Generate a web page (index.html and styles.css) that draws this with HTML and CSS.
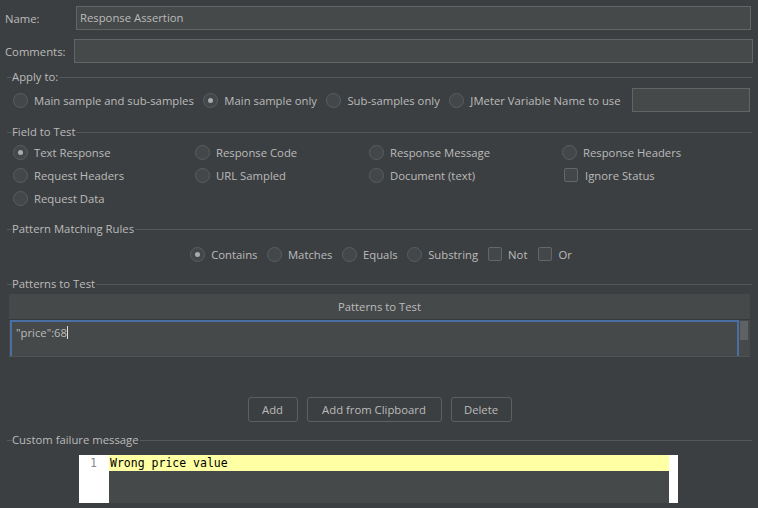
FILE: index.html
```html
<!DOCTYPE html>
<html>
<head>
<meta charset="utf-8">
<link rel="stylesheet" href="styles.css">
</head>
<body>
<div class="page">
  <div class="field name-row">
    <span class="lbl name-lbl">Name:</span>
    <div class="input">Response Assertion</div>
  </div>
  <div class="field comments-row">
    <span class="lbl comments-lbl">Comments:</span>
    <div class="input"></div>
  </div>

  <div class="section apply-title"><span class="stitle">Apply to:</span></div>
  <div class="apply-row">
    <label class="opt"><span class="radio"></span>Main sample and sub-samples</label>
    <label class="opt"><span class="radio on"></span>Main sample only</label>
    <label class="opt"><span class="radio"></span>Sub-samples only</label>
    <label class="opt"><span class="radio"></span>JMeter Variable Name to use</label>
    <div class="input var-input"></div>
  </div>

  <div class="section field-title"><span class="stitle">Field to Test</span></div>
  <div class="field-grid">
    <label class="opt"><span class="radio on"></span>Text Response</label>
    <label class="opt"><span class="radio"></span>Response Code</label>
    <label class="opt"><span class="radio"></span>Response Message</label>
    <label class="opt"><span class="radio"></span>Response Headers</label>
    <label class="opt"><span class="radio"></span>Request Headers</label>
    <label class="opt"><span class="radio"></span>URL Sampled</label>
    <label class="opt"><span class="radio"></span>Document (text)</label>
    <label class="opt"><span class="check"></span>Ignore Status</label>
    <label class="opt"><span class="radio"></span>Request Data</label>
  </div>

  <div class="section rules-title"><span class="stitle">Pattern Matching Rules</span></div>
  <div class="rules-row">
    <label class="opt"><span class="radio on"></span>Contains</label>
    <label class="opt"><span class="radio"></span>Matches</label>
    <label class="opt"><span class="radio"></span>Equals</label>
    <label class="opt"><span class="radio"></span>Substring</label>
    <label class="opt"><span class="check"></span>Not</label>
    <label class="opt"><span class="check"></span>Or</label>
  </div>

  <div class="section patterns-title"><span class="stitle">Patterns to Test</span></div>
  <div class="table">
    <div class="thead">Patterns to Test</div>
    <div class="tbody">
      <div class="cell-edit">"price":68<span class="caret"></span></div>
      <div class="vscroll"><div class="thumb"></div></div>
    </div>
  </div>

  <div class="buttons">
    <button class="btn btn-add">Add</button>
    <button class="btn btn-clip">Add from Clipboard</button>
    <button class="btn btn-del">Delete</button>
  </div>

  <div class="section failure-title"><span class="stitle">Custom failure message</span></div>
  <div class="editor">
    <div class="gutter">1</div>
    <div class="code">
      <div class="line-hl">Wrong price value</div>
    </div>
    <div class="edge"></div>
  </div>
</div>
</body>
</html>
```

FILE: styles.css
```css
* { box-sizing: border-box; }
html, body {
  margin: 0;
  padding: 0;
  background: #3c3f41;
}
body {
  width: 758px;
  height: 508px;
  overflow: hidden;
  font-family: "Open Sans", "Noto Sans", sans-serif;
  font-size: 11.3px;
  color: #bbbbbb;
}
.page {
  display: flex;
  flex-direction: column;
}
.field {
  display: flex;
  align-items: center;
  height: 24px;
}
.name-row { margin-top: 6px; padding: 0 7px 0 5px; }
.name-lbl { width: 71px; }
.comments-row { margin-top: 9px; padding: 0 5px 0 5px; }
.comments-lbl { width: 69px; }
.input {
  flex: 1;
  height: 24px;
  background: #45494a;
  border: 1px solid #646464;
  padding: 0 3px;
  line-height: 22px;
  color: #bbbbbb;
}

.section {
  display: flex;
  align-items: center;
  height: 14px;
  margin-left: 7px;
  margin-right: 6px;
}
.section::before {
  content: "";
  width: 5px;
  height: 1px;
  background: #55585a;
}
.section::after {
  content: "";
  flex: 1;
  height: 1px;
  background: #55585a;
}
.stitle {
  padding: 0 1px 0 0;
  line-height: 14px;
}
.apply-title { margin-top: 7px; }
.field-title { margin-top: 13px; }
.rules-title { margin-top: 13px; }
.patterns-title { margin-top: 13px; }
.failure-title { margin-top: 11px; }

.opt {
  display: flex;
  align-items: center;
  white-space: nowrap;
}
.radio {
  width: 15px;
  height: 15px;
  border-radius: 50%;
  border: 1px solid #5b5e60;
  background: #43474a;
  margin-right: 6px;
  flex: none;
  display: flex;
  align-items: center;
  justify-content: center;
}
.radio.on::after {
  content: "";
  width: 5px;
  height: 5px;
  border-radius: 50%;
  background: #a9abad;
}
.check {
  width: 14px;
  height: 14px;
  border: 1px solid #646668;
  border-radius: 2px;
  background: #43474a;
  margin-right: 7px;
  flex: none;
}

.apply-row {
  display: flex;
  align-items: center;
  height: 24px;
  margin-top: 4px;
  padding-left: 13px;
  gap: 9px;
}
.opt + .opt { margin-left: 0.5px; }
.var-input {
  flex: none;
  width: 118px;
  height: 24px;
  margin-left: 2px;
}

.field-grid {
  display: grid;
  grid-template-columns: 182px 174px 193px 1fr;
  grid-auto-rows: 22px;
  row-gap: 1px;
  margin-top: 2px;
  padding-left: 13px;
}
.field-grid .opt { margin-left: 0; }
.field-grid .opt:nth-child(8) .check { margin-left: 2px; }

.rules-row {
  display: flex;
  justify-content: center;
  align-items: center;
  height: 20px;
  margin-top: 8px;
  gap: 9px;
  padding-left: 4px;
}
.rules-row .check { margin-right: 6px; }
.rules-row .opt:nth-child(5) { margin-left: 1px; }
.rules-row .opt:nth-child(6) { margin-left: 2px; }

.table {
  margin: 3px 8px 0 9px;
}
.thead {
  height: 26px;
  background: #45494a;
  border-bottom: 1px solid #363839;
  text-align: center;
  line-height: 25px;
}
.tbody {
  display: flex;
  height: 37px;
  background: #45494a;
  border-bottom: 1px solid #505355;
}
.cell-edit {
  flex: 1;
  margin-left: 1px;
  border-top: 2px solid #4a6fa5;
  border-left: 2px solid #4a6fa5;
  border-right: 2px solid #4a6fa5;
  padding: 3px 4px;
  line-height: 15px;
}
.caret {
  display: inline-block;
  width: 1px;
  height: 13px;
  background: #dddddd;
  vertical-align: -2px;
}
.vscroll {
  width: 11px;
  padding: 1px 2px 0 1px;
  background: #45494a;
}
.thumb {
  height: 19px;
  background: #5f6264;
}

.buttons {
  display: flex;
  justify-content: center;
  gap: 9px;
  margin-top: 40px;
  padding-left: 1px;
}
.btn {
  height: 25px;
  border: 1px solid #5e6060;
  border-radius: 3px;
  background: #3c3f41;
  color: #bbbbbb;
  font-family: inherit;
  font-size: inherit;
  padding: 0;
}
.btn-add { width: 50px; }
.btn-clip { width: 135px; }
.btn-del { width: 61px; }

.editor {
  display: flex;
  margin: 8px 0 0 79px;
  width: 599px;
  height: 48px;
}
.gutter {
  width: 30px;
  background: #ffffff;
  color: #8a8a8a;
  font-family: "DejaVu Sans Mono", monospace;
  font-size: 11.5px;
  line-height: 16px;
  text-align: right;
  padding-right: 12px;
}
.code {
  flex: 1;
  background: #45494a;
}
.line-hl {
  height: 16px;
  background: #ffffa4;
  color: #000000;
  font-family: "DejaVu Sans Mono", monospace;
  font-size: 11.5px;
  line-height: 16px;
  padding-left: 1px;
}
.edge {
  width: 9px;
  background: #ffffff;
}
```
